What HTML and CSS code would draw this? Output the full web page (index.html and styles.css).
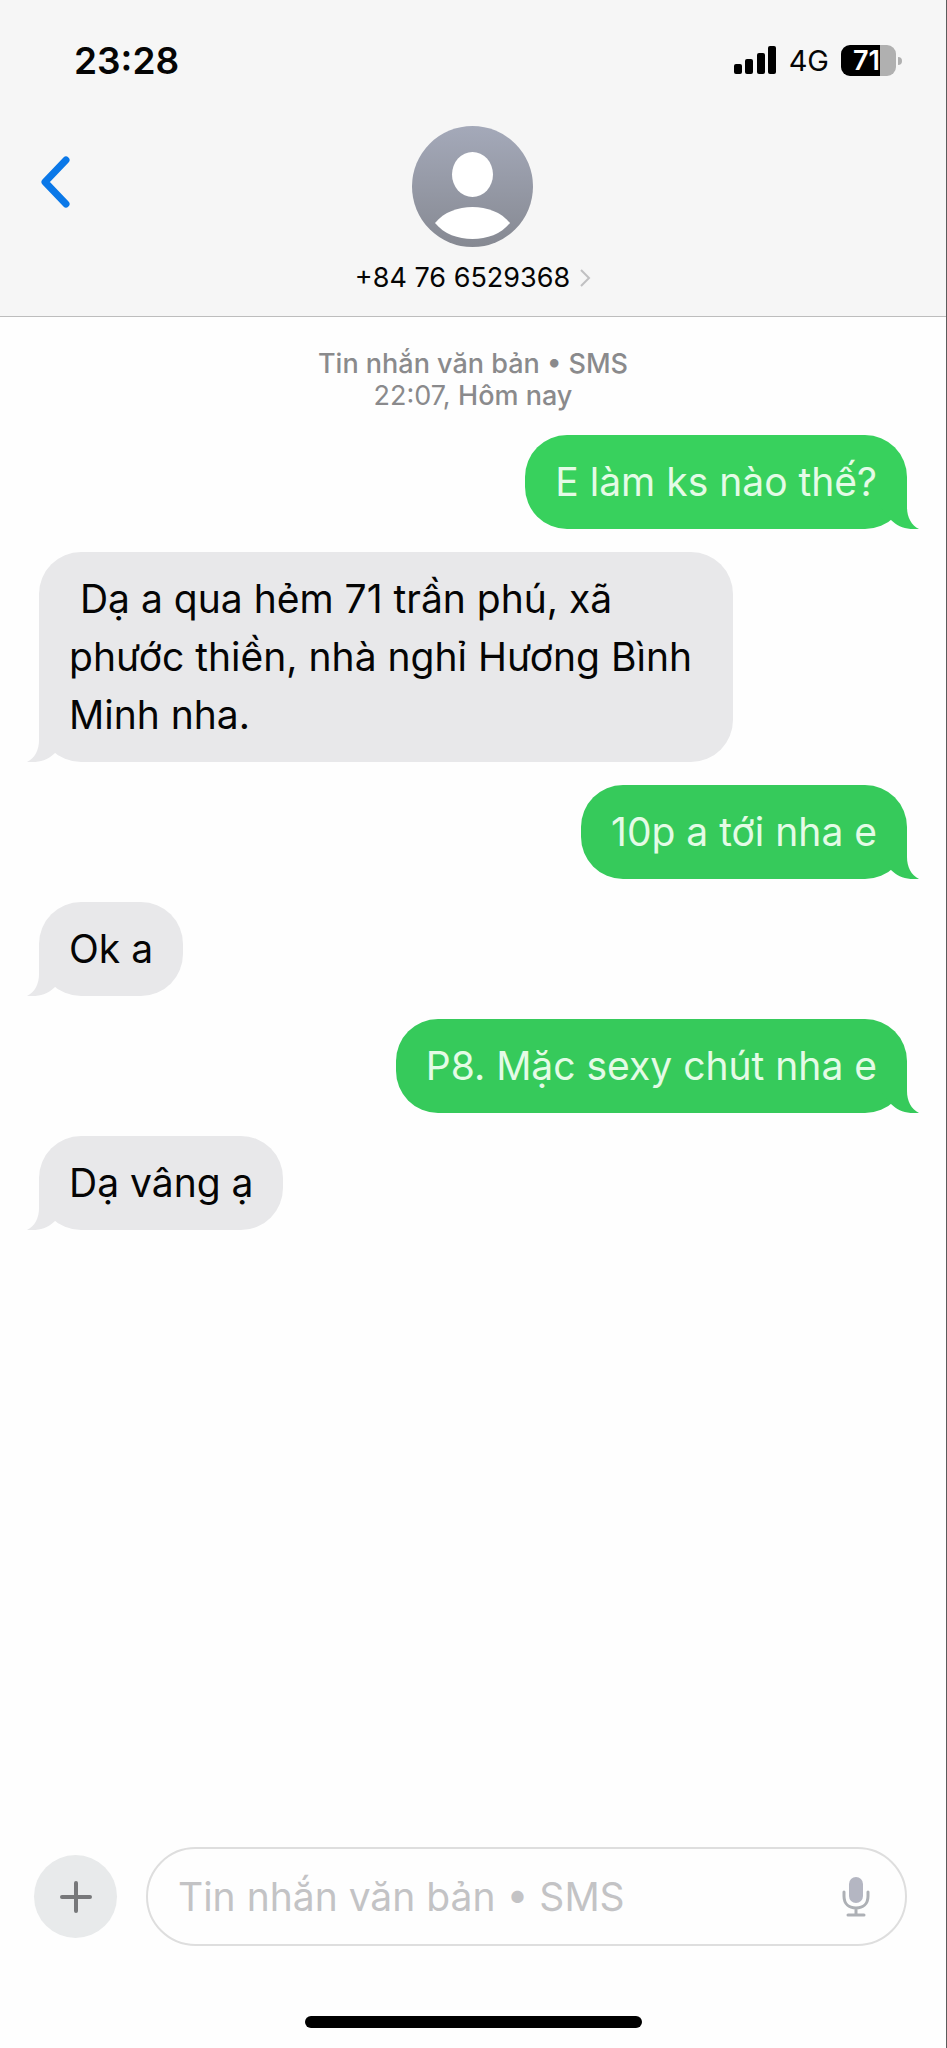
FILE: index.html
```html
<!DOCTYPE html>
<html lang="vi">
<head>
<meta charset="utf-8">
<meta name="viewport" content="width=device-width, initial-scale=1">
<title>+84 76 6529368</title>
<link rel="stylesheet" href="styles.css">
</head>
<body>
<svg class="defs" aria-hidden="true">
  <symbol id="tail" viewBox="0 0 40 44">
    <path d="M12 0V22C12 32 8 40 0 44C12 45 21 42 28 35L40 20V0Z"/>
  </symbol>
</svg>
<div class="screen">
  <header class="header">
    <div class="status">
      <time class="clock">23:28</time>
      <div class="indicators">
        <svg class="signal" viewBox="0 0 43 28" role="img" aria-label="Sóng di động">
          <rect x="0" y="18" width="8" height="10" rx="2"/>
          <rect x="11" y="13" width="8" height="15" rx="2"/>
          <rect x="23" y="7" width="8" height="21" rx="2"/>
          <rect x="34" y="0" width="8" height="28" rx="2"/>
        </svg>
        <span class="network">4G</span>
        <div class="battery"><span class="level">71</span></div>
      </div>
    </div>
    <div class="nav">
      <button class="back" aria-label="Quay lại">
        <svg viewBox="0 0 32 52"><path d="M26 4L5 26L26 48"/></svg>
      </button>
      <button class="contact">
        <svg class="avatar" viewBox="0 0 121 121" aria-hidden="true">
          <defs>
            <linearGradient id="shade" x1="0" y1="0" x2="0" y2="1">
              <stop offset="0" stop-color="#a4a9b9"/>
              <stop offset="1" stop-color="#868992"/>
            </linearGradient>
          </defs>
          <circle cx="60.500" cy="60.500" r="60.500" fill="url(#shade)"/>
          <ellipse cx="60.500" cy="48.500" rx="20.500" ry="22.500" fill="#fff"/>
          <path d="M23 97C32 86 46 81 60.500 81C75 81 89 86 98 97C89 108 75 113 60.500 113C46 113 32 108 23 97Z" fill="#fff"/>
        </svg>
        <span class="number">+84 76 6529368
          <svg class="more" viewBox="0 0 12 18" aria-hidden="true"><path d="M2 1L10 9L2 17"/></svg>
        </span>
      </button>
      <span class="spacer"></span>
    </div>
  </header>

  <main class="thread">
    <p class="meta"><b>Tin nhắn văn bản • SMS</b><br>22:07, <b>Hôm nay</b></p>
    <div class="bubble sent first">E làm ks nào thế?<svg class="tail"><use href="#tail"/></svg></div>
    <div class="bubble received"> Dạ a qua hẻm 71 trần phú, xã phước thiền, nhà nghỉ Hương Bình Minh nha.<svg class="tail"><use href="#tail"/></svg></div>
    <div class="bubble sent">10p a tới nha e<svg class="tail"><use href="#tail"/></svg></div>
    <div class="bubble received">Ok a<svg class="tail"><use href="#tail"/></svg></div>
    <div class="bubble sent">P8. Mặc sexy chút nha e<svg class="tail"><use href="#tail"/></svg></div>
    <div class="bubble received">Dạ vâng ạ<svg class="tail"><use href="#tail"/></svg></div>
  </main>

  <footer class="footer">
    <form class="composer">
      <button class="add" type="button" aria-label="Thêm">
        <svg viewBox="0 0 32 32"><path d="M16 2V30M2 16H30"/></svg>
      </button>
      <div class="field">
        <input class="input" type="text" placeholder="Tin nhắn văn bản • SMS" aria-label="Tin nhắn văn bản">
        <button class="mic" type="button" aria-label="Đọc chính tả">
          <svg viewBox="0 0 28 42">
            <rect class="capsule" x="7" y="1" width="14" height="26" rx="7"/>
            <path d="M2 16V20C2 28 7 32 14 32S26 28 26 20V16M14 32V39M6 39H22"/>
          </svg>
        </button>
      </div>
    </form>
    <div class="home"></div>
  </footer>
</div>
</body>
</html>
```

FILE: styles.css
```css
* {
  box-sizing: border-box;
}

body {
  margin: 0;
  background: #fefefe;
  color: #050505;
  font-family: Inter, "Liberation Sans", sans-serif;
}

button {
  padding: 0;
  border: 0;
  background: none;
  color: inherit;
  font: inherit;
}

svg {
  display: block;
}

.defs {
  display: none;
}

.screen {
  display: flex;
  flex-direction: column;
  min-height: 100vh;
  border-right: 1px solid #5c5c5c;
}

.header {
  padding: 36px 40px 22px;
  background: #f6f6f6;
  border-bottom: 1px solid #bdbdbd;
}

.status {
  display: flex;
  align-items: center;
  justify-content: space-between;
  height: 48px;
  padding: 0 4px 0 34px;
}

.clock {
  font-size: 37px;
  font-weight: 600;
}

.indicators {
  display: flex;
  align-items: center;
  gap: 12px;
}

.signal {
  width: 43px;
  height: 28px;
}

.network {
  font-size: 29px;
  font-weight: 400;
}

.battery {
  position: relative;
  width: 55px;
  height: 31px;
  margin-right: 6px;
  border-radius: 9px;
  background: linear-gradient(90deg, #000 71%, #b0b0b0 71%);
}

.battery::after {
  content: "";
  position: absolute;
  top: 12px;
  right: -6px;
  width: 4px;
  height: 8px;
  border-radius: 0 4px 4px 0;
  background: #b0b0b0;
}

.level {
  display: block;
  padding-left: 12px;
  color: #fff;
  font-size: 27px;
  font-weight: 600;
  line-height: 31px;
}

.nav {
  display: grid;
  grid-template-columns: 1fr auto 1fr;
  padding-top: 42px;
}

.back {
  justify-self: start;
  align-self: start;
  margin-top: 30px;
}

.back svg {
  width: 32px;
  height: 52px;
  fill: none;
  stroke: #0a78e8;
  stroke-width: 7;
  stroke-linecap: round;
  stroke-linejoin: round;
}

.contact {
  display: flex;
  flex-direction: column;
  align-items: center;
  gap: 15px;
}

.avatar {
  width: 121px;
  height: 121px;
}

.number {
  display: flex;
  align-items: center;
  gap: 9px;
  font-size: 27px;
  line-height: 32px;
}

.more {
  width: 12px;
  height: 18px;
  fill: none;
  stroke: #c0c0c2;
  stroke-width: 2;
}

.thread {
  display: flex;
  flex: 1;
  flex-direction: column;
  gap: 23px;
  padding: 31px 39px;
}

.meta {
  margin: 0;
  color: #8a8a8c;
  font-size: 27px;
  line-height: 32px;
  text-align: center;
}

.meta b {
  font-weight: 500;
}

.bubble {
  position: relative;
  max-width: 80%;
  padding: 18px 30px;
  border-radius: 42px;
  font-size: 39px;
  line-height: 58px;
  white-space: pre-wrap;
}

.sent {
  align-self: flex-end;
  background: #36ca5b;
  color: #e4fbe6;
}

.first {
  background: #38d15d;
}

.received {
  align-self: flex-start;
  background: #e8e8ea;
}

.tail {
  position: absolute;
  bottom: 0;
  left: -12px;
  width: 40px;
  height: 44px;
  fill: #e8e8ea;
}

.sent .tail {
  right: -12px;
  left: auto;
  fill: #36ca5b;
  transform: scaleX(-1);
}

.first .tail {
  fill: #38d15d;
}

.footer {
  padding-bottom: 20px;
}

.composer {
  display: flex;
  align-items: center;
  gap: 29px;
  padding: 0 39px 0 34px;
}

.add {
  display: grid;
  place-items: center;
  width: 83px;
  height: 83px;
  border-radius: 50%;
  background: #e8eaeb;
}

.add svg {
  width: 32px;
  height: 32px;
  fill: none;
  stroke: #77787a;
  stroke-width: 4;
  stroke-linecap: round;
}

.field {
  display: flex;
  flex: 1;
  align-items: center;
  height: 99px;
  padding: 0 35px 0 30px;
  border: 2px solid #dedede;
  border-radius: 50px;
}

.input {
  flex: 1;
  min-width: 0;
  padding: 0;
  border: 0;
  outline: 0;
  background: none;
  color: #050505;
  font: inherit;
  font-size: 39px;
}

.input::placeholder {
  color: #c3c3c5;
  opacity: 1;
}

.mic svg {
  width: 28px;
  height: 42px;
  fill: none;
  stroke: #adb0b5;
  stroke-width: 3;
  stroke-linecap: round;
}

.mic .capsule {
  fill: #b4b6c2;
  stroke: none;
}

.home {
  width: 337px;
  height: 12px;
  margin: 70px auto 0;
  border-radius: 6px;
  background: #000;
}
```
